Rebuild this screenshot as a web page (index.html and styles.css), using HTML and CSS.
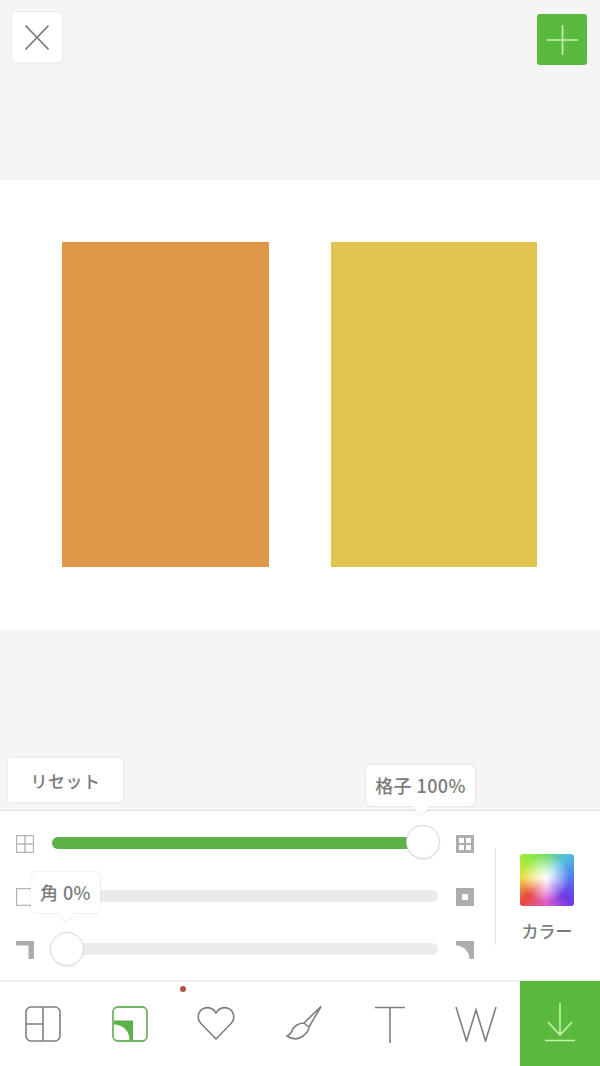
FILE: index.html
```html
<!DOCTYPE html>
<html lang="ja">
<head>
    <meta charset="UTF-8">
    <meta name="viewport" content="width=device-width, initial-scale=1.0">
    <title>コラージュ編集</title>
    <link rel="stylesheet" href="styles.css">
</head>
<body>
    <div class="app">
        <div class="topbar">
            <button class="btn-close">
                <svg width="24" height="25" viewBox="0 0 24 25"><path d="M.5.500L23.500 24.500M23.500.5L.5 24.500" class="stroke-gray"/></svg>
            </button>
            <button class="btn-add">
                <svg width="31" height="30" viewBox="0 0 31 30"><path d="M15.500 0V30M0 15H31" class="stroke-light"/></svg>
            </button>
        </div>

        <div class="canvas">
            <div class="cell cell-orange"></div>
            <div class="cell cell-yellow"></div>
        </div>

        <div class="stage">
            <button class="btn-reset">リセット</button>
        </div>

        <div class="panel">
            <div class="sliders">
                <div class="slider-row">
                    <svg class="side-icon" width="18" height="18" viewBox="0 0 18 18"><path d="M.5.500H17.500V17.500H.5ZM9 .5V17.500M.5 9H17.500" class="stroke-box"/></svg>
                    <div class="track">
                        <div class="track-fill" style="width: 96%"></div>
                        <div class="thumb thumb-end"></div>
                        <div class="tip tip-grid">格子 100%</div>
                    </div>
                    <svg class="side-icon" width="18" height="18" viewBox="0 0 18 18"><path d="M0 0H18V18H0ZM3 3V8H8V3ZM10 3V8H15V3ZM3 10V15H8V10ZM10 10V15H15V10Z" class="fill-box" fill-rule="evenodd"/></svg>
                </div>
                <div class="slider-row">
                    <svg class="side-icon" width="18" height="18" viewBox="0 0 18 18"><path d="M.5.500H17.500V17.500H.5Z" class="stroke-box"/></svg>
                    <div class="track"></div>
                    <svg class="side-icon" width="18" height="18" viewBox="0 0 18 18"><path d="M0 0H18V18H0ZM6 6V12H12V6Z" class="fill-box" fill-rule="evenodd"/></svg>
                </div>
                <div class="slider-row">
                    <svg class="side-icon" width="18" height="18" viewBox="0 0 18 18"><path d="M0 0H18V18H12.500V4.500H0Z" class="fill-box"/></svg>
                    <div class="track">
                        <div class="thumb thumb-start"></div>
                        <div class="tip tip-corner">角 0%</div>
                    </div>
                    <svg class="side-icon" width="18" height="18" viewBox="0 0 18 18"><path d="M0 0H18V18H13.500C13.500 11 8 4.500 0 4.500Z" class="fill-box"/></svg>
                </div>
            </div>
            <div class="color-picker">
                <div class="swatch"></div>
                <div class="color-label">カラー</div>
            </div>
        </div>

        <div class="toolbar">
            <div class="tools">
                <button class="tool">
                    <svg width="36" height="36" viewBox="0 0 36 36"><rect x="1" y="1" width="34" height="34" rx="5" class="stroke-dark"/><path d="M18 1V35M1 18H18" class="stroke-dark"/></svg>
                </button>
                <button class="tool">
                    <svg width="36" height="36" viewBox="0 0 36 36"><rect x="1" y="1" width="34" height="34" rx="5" class="stroke-green"/><path d="M2 14.500H21V34H17.500C17.500 25 11 18.500 2 18.500Z" class="fill-green"/></svg>
                </button>
                <button class="tool">
                    <svg width="38" height="34" viewBox="0 0 38 34"><path d="M19 33L3.500 17C-.5 12.500 1 5 6.500 2.500C11 .5 16.500 2 19 7C21.500 2 27 .5 31.500 2.500C37 5 38.500 12.500 34.500 17Z" class="stroke-dark"/></svg>
                    <span class="dot"></span>
                </button>
                <button class="tool">
                    <svg width="38" height="36" viewBox="0 0 38 36"><path d="M37 .5L20 17L25 21ZM20 17C14 17 9 21 8 25C7 28 5 29 3 30C9 34 15 33 19 30C23 27 25 24 25 21" class="stroke-dark"/></svg>
                </button>
                <button class="tool">
                    <svg width="32" height="37" viewBox="0 0 32 37"><path d="M1 1.500H31M16 1.500V37" class="stroke-dark"/></svg>
                </button>
                <button class="tool">
                    <svg width="42" height="36" viewBox="0 0 42 36"><path d="M1 1L11.500 35L21 4L30.500 35L41 1" class="stroke-dark"/></svg>
                </button>
            </div>
            <button class="btn-save">
                <svg width="32" height="40" viewBox="0 0 32 40"><path d="M16 1V33M4 20L16 33L28 20M1 38.500H31" class="stroke-light"/></svg>
            </button>
        </div>
    </div>
</body>
</html>
```

FILE: styles.css
```css
body {
    margin: 0;
    background: #f5f5f6;
    font-family: 'Noto Sans CJK JP', 'Noto Sans', sans-serif;
    color: #7b7b7b;
}

button {
    padding: 0;
    border: none;
    background: none;
    font-family: inherit;
    color: inherit;
}

svg {
    display: block;
}

.app {
    display: flex;
    flex-direction: column;
    height: 1066px;
    overflow: hidden;
}

/* stroke and fill colours for the icons */
.stroke-gray, .stroke-dark, .stroke-light, .stroke-green, .stroke-box {
    fill: none;
    stroke-width: 1.6;
}

.stroke-gray { stroke: #7d7d7d; }
.stroke-dark { stroke: #7f7f7f; stroke-width: 1.6; }
.stroke-light { stroke: #c4f5a8; stroke-width: 1.6; }
.stroke-green { stroke: #6db560; stroke-width: 1.8; }
.stroke-box { stroke: #b4b4b4; stroke-width: 1.4; }
.fill-box { fill: #adadad; }
.fill-green { fill: #5bb146; }

.topbar {
    display: flex;
    justify-content: space-between;
    align-items: flex-start;
    height: 168px;
    padding: 12px 13px 0 12px;
    flex-shrink: 0;
}

.btn-close {
    display: flex;
    align-items: center;
    justify-content: center;
    width: 50px;
    height: 50px;
    background: #fff;
    border-radius: 3px;
    box-shadow: 0 0 2px rgba(0, 0, 0, 0.14);
}

.btn-add {
    display: flex;
    align-items: center;
    justify-content: center;
    width: 50px;
    height: 51px;
    margin-top: 2px;
    background: #5bb93f;
    border-radius: 3px;
}

.canvas {
    display: flex;
    justify-content: space-between;
    height: 326px;
    padding: 62px 63px 62px 62px;
    background: #fff;
    flex-shrink: 0;
}

.cell {
    width: 207px;
    height: 325px;
}

.cell-orange { background: #de9746; }
.cell-yellow { width: 206px; background: #e1c350; }

.stage {
    display: flex;
    align-items: flex-end;
    height: 180px;
    padding: 0 0 8px 8px;
    box-sizing: border-box;
    flex-shrink: 0;
    background: #f5f5f7;
}

.btn-reset {
    width: 115px;
    height: 44px;
    background: #fff;
    border-radius: 3px;
    box-shadow: 0 0 2px rgba(0, 0, 0, 0.16);
    font-size: 17px;
    font-weight: 500;
    letter-spacing: 0.5px;
}

.panel {
    display: flex;
    height: 169px;
    background: #fff;
    border-top: 1px solid #dfdfe1;
    flex-shrink: 0;
}

.sliders {
    display: flex;
    flex-direction: column;
    gap: 35px;
    width: 474px;
    padding: 24px 0 0 16px;
    box-sizing: border-box;
}

.slider-row {
    display: flex;
    align-items: center;
    gap: 18px;
    height: 18px;
}

.side-icon {
    flex-shrink: 0;
}

.track {
    position: relative;
    flex: 1;
    height: 12px;
    margin-top: -2px;
    background: #ebebeb;
    border-radius: 6px;
}

.track-fill {
    height: 100%;
    background: #5bb146;
    border-radius: 6px 0 0 6px;
}

.thumb {
    position: absolute;
    top: -12px;
    width: 34px;
    height: 34px;
    box-sizing: border-box;
    background: #fff;
    border: 1px solid #d8d8d8;
    border-radius: 50%;
    box-shadow: 0 1px 2px rgba(0, 0, 0, 0.08);
}

.thumb-end { left: 354px; }
.thumb-start { left: -2px; top: -11px; }

.tip {
    position: absolute;
    z-index: 2;
    height: 41px;
    line-height: 41px;
    box-sizing: border-box;
    background: #fff;
    border-radius: 5px;
    box-shadow: 0 0 2px rgba(0, 0, 0, 0.2);
    font-size: 18px;
    font-weight: 500;
    letter-spacing: 0.4px;
    text-align: center;
    white-space: nowrap;
}

.tip::after {
    content: "";
    position: absolute;
    left: 50%;
    bottom: -8px;
    width: 12px;
    height: 12px;
    margin-left: -6px;
    background: #fff;
    transform: scaleY(0.8) rotate(45deg);
    box-shadow: 1px 1px 1px rgba(0, 0, 0, 0.07);
}

.tip-grid {
    left: 314px;
    top: -72px;
    width: 109px;
}

.tip-corner {
    left: -21px;
    top: -71px;
    width: 69px;
}

.color-picker {
    flex: 1;
    margin: 37px 0 35px 21px;
    border-left: 1px solid #e6e6e6;
    padding: 6px 0 0 24px;
}

.swatch {
    width: 54px;
    height: 52px;
    border-radius: 3px;
    background:
        radial-gradient(circle at 48% 46%, #fff 0, rgba(255, 255, 255, 0.8) 14%, rgba(255, 255, 255, 0) 60%),
        conic-gradient(at 48% 46%, #6fdc62, #4fc0e0 45deg, #4f78ee 90deg, #7038e6 135deg, #e060c8 180deg, #e8463f 225deg, #f0dc40 270deg, #98ec40 315deg, #6fdc62);
}

.color-label {
    width: 54px;
    margin-top: 12px;
    font-size: 17px;
    font-weight: 500;
    line-height: 26px;
    text-align: center;
    white-space: nowrap;
}

.toolbar {
    display: flex;
    height: 86px;
    background: #fff;
    border-top: 2px solid #eeeeef;
    box-sizing: border-box;
    flex-shrink: 0;
}

.tools {
    flex: 1;
    display: flex;
}

.tool {
    position: relative;
    display: flex;
    align-items: flex-start;
    justify-content: center;
    width: 86.600px;
    padding-top: 24px;
}

.dot {
    position: absolute;
    top: 4px;
    left: 7px;
    width: 6px;
    height: 6px;
    background: #b9524c;
    border-radius: 50%;
}

.btn-save {
    display: flex;
    align-items: flex-start;
    justify-content: center;
    width: 80px;
    height: 85px;
    margin-top: -1px;
    padding-top: 21px;
    box-sizing: border-box;
    background: #5bb93f;
}
```
